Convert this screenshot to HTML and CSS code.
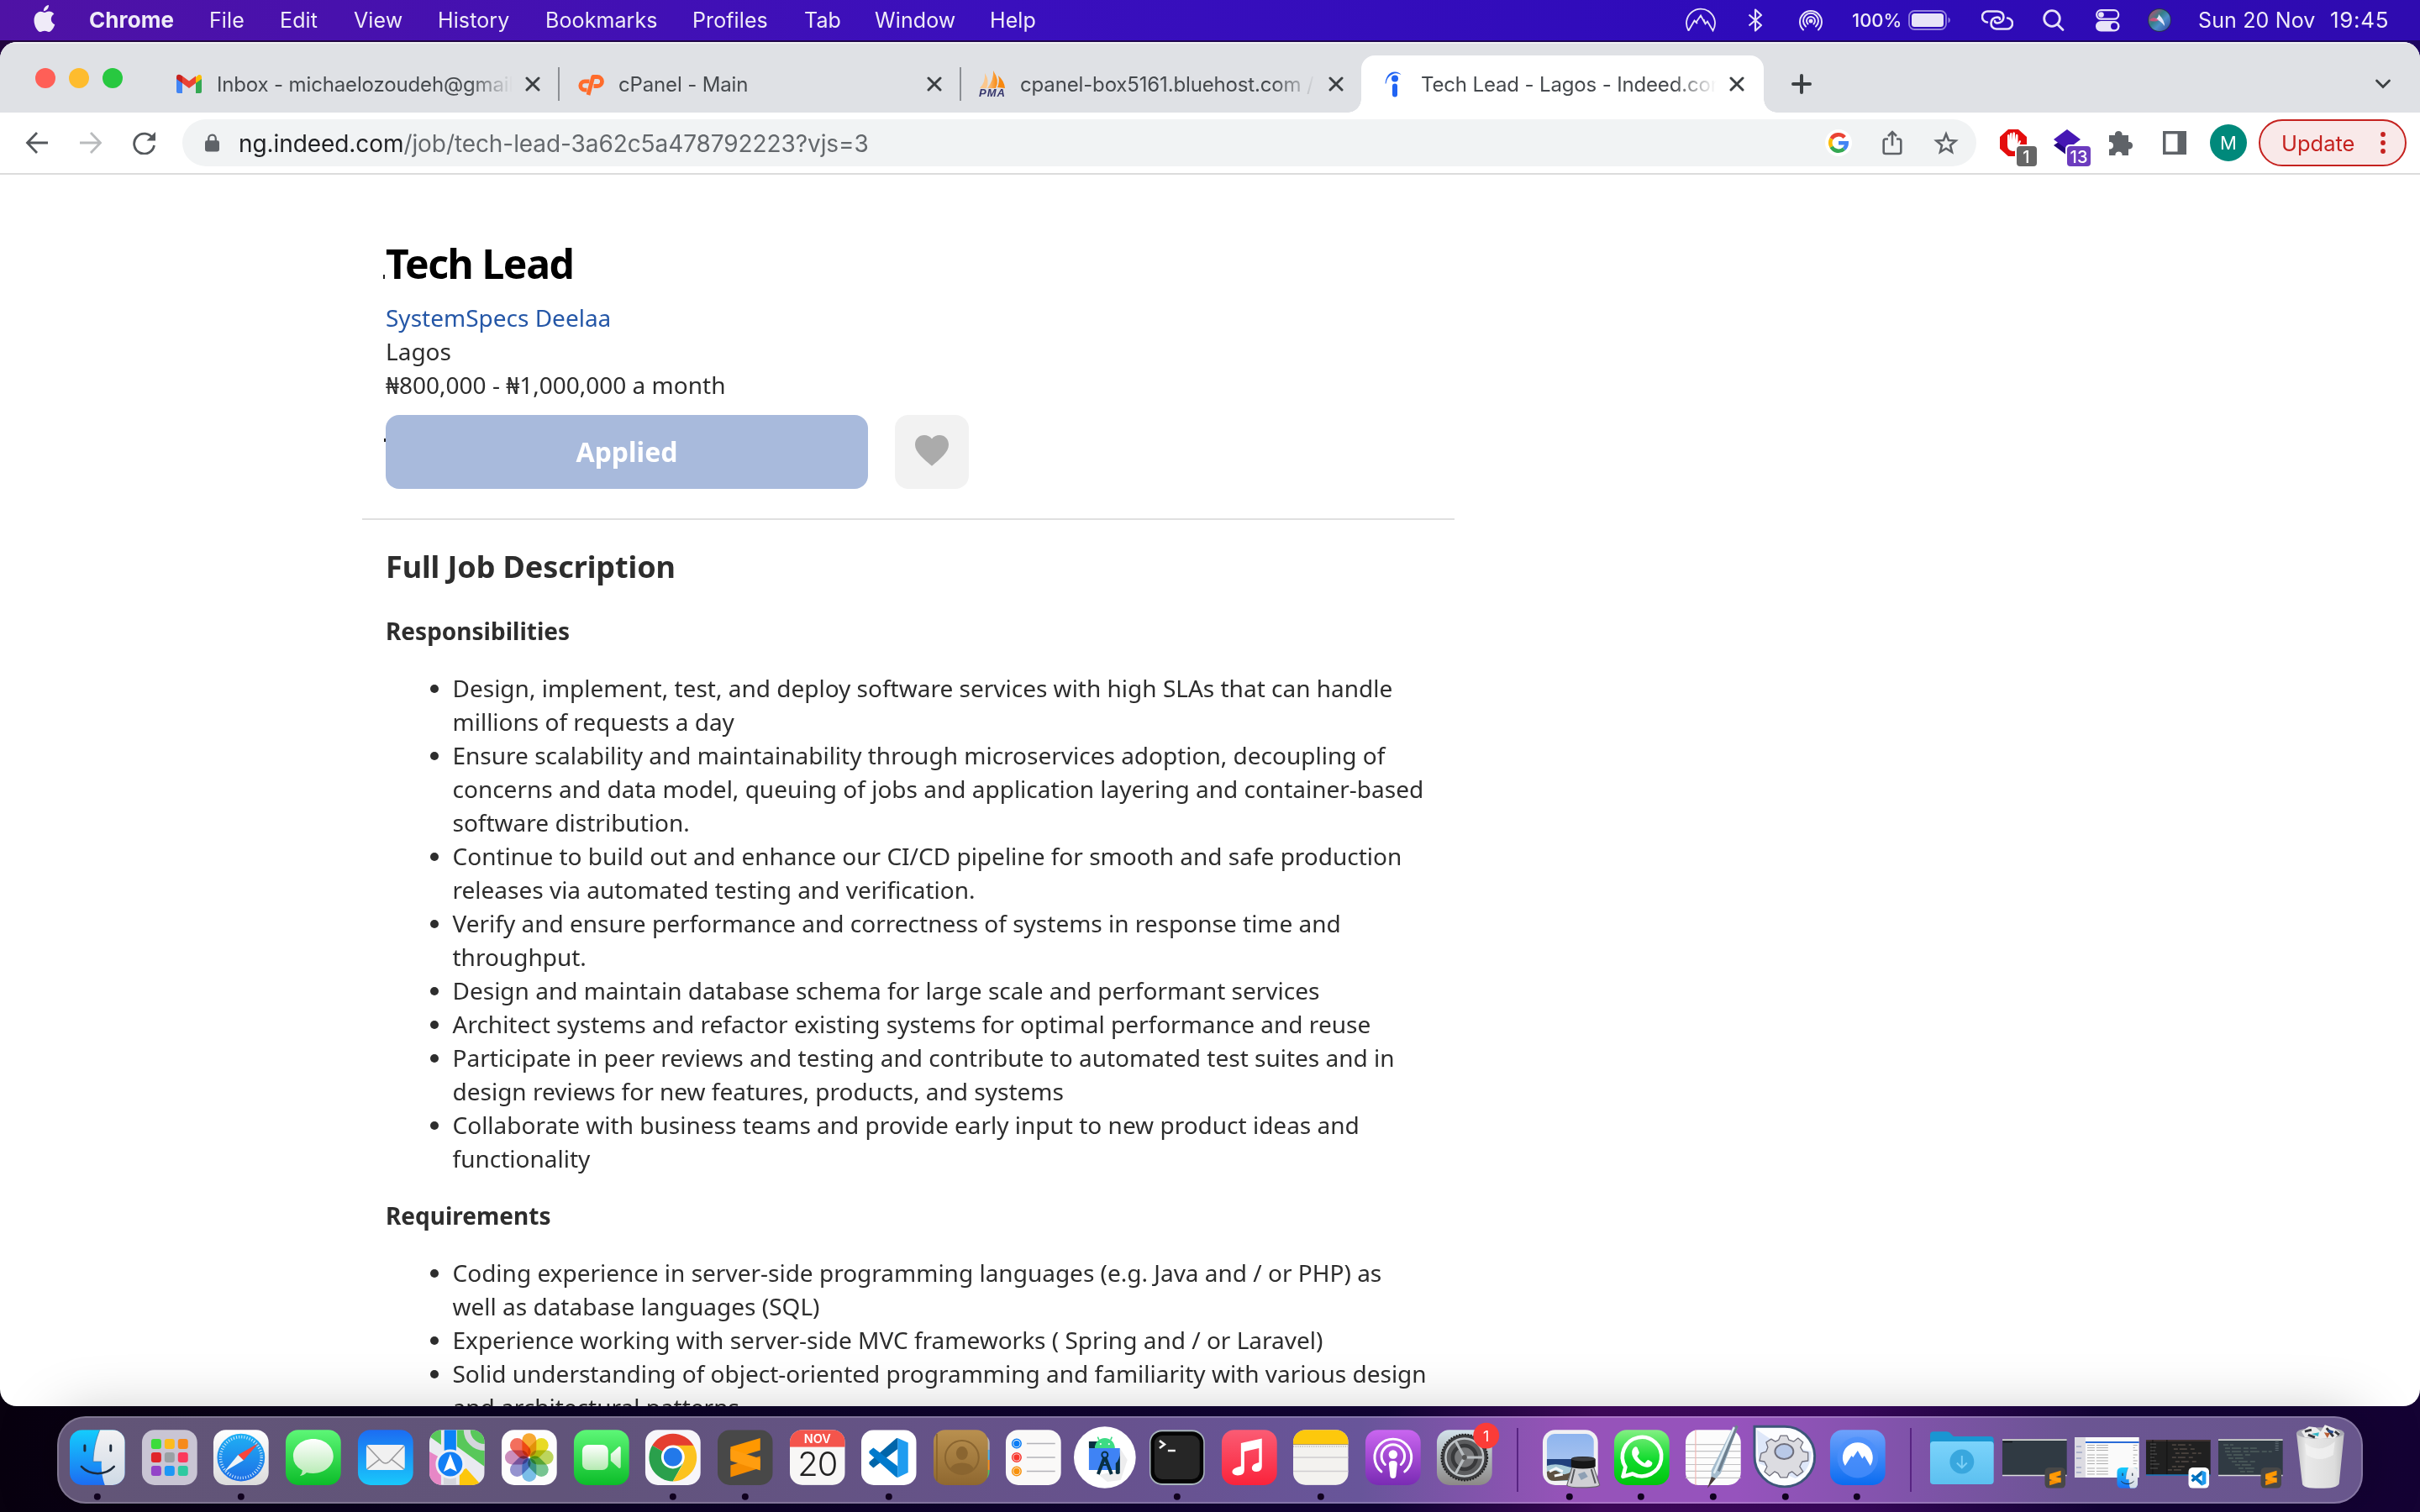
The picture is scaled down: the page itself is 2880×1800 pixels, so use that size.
FILE: index.html
```html
<!DOCTYPE html>
<html lang="en">
<head>
<meta charset="utf-8">
<title>Tech Lead - Lagos - Indeed.com</title>
<link rel="stylesheet" href="styles.css">
</head>
<body>
<svg class="defs" aria-hidden="true">
  <defs>
    <linearGradient id="gGreen" x1="0" y1="0" x2="0" y2="1"><stop offset="0" stop-color="#5df777"/><stop offset="1" stop-color="#0cbd29"/></linearGradient>
    <linearGradient id="gMail" x1="0" y1="0" x2="0" y2="1"><stop offset="0" stop-color="#1c6cf2"/><stop offset="1" stop-color="#19c8fb"/></linearGradient>
    <linearGradient id="gFinder" x1="0" y1="0" x2="0" y2="1"><stop offset="0" stop-color="#14cdfd"/><stop offset="1" stop-color="#1c6df2"/></linearGradient>
    <linearGradient id="gPale" x1="0" y1="0" x2="0" y2="1"><stop offset="0" stop-color="#f3f2f3"/><stop offset="1" stop-color="#cfdae6"/></linearGradient>
    <linearGradient id="gWhite" x1="0" y1="0" x2="0" y2="1"><stop offset="0" stop-color="#ffffff"/><stop offset="1" stop-color="#dcdcdc"/></linearGradient>
    <linearGradient id="gBubble" x1="0" y1="0" x2="0" y2="1"><stop offset="0" stop-color="#ffffff"/><stop offset="1" stop-color="#b5eab2"/></linearGradient>
    <linearGradient id="gSafari" x1="0" y1="0" x2="0" y2="1"><stop offset="0" stop-color="#1fb1f4"/><stop offset="1" stop-color="#1d6ee6"/></linearGradient>
    <linearGradient id="gMusic" x1="0" y1="0" x2="0" y2="1"><stop offset="0" stop-color="#fb5c74"/><stop offset="1" stop-color="#fa233b"/></linearGradient>
    <linearGradient id="gPod" x1="0" y1="0" x2="0" y2="1"><stop offset="0" stop-color="#ca66f0"/><stop offset="1" stop-color="#7a2bb4"/></linearGradient>
    <linearGradient id="gPrefs" x1="0" y1="0" x2="0" y2="1"><stop offset="0" stop-color="#d3e2ea"/><stop offset="1" stop-color="#8c8987"/></linearGradient>
    <linearGradient id="gWhats" x1="0" y1="0" x2="0" y2="1"><stop offset="0" stop-color="#84f084"/><stop offset=".55" stop-color="#10db2c"/><stop offset="1" stop-color="#00c40c"/></linearGradient>
    <linearGradient id="gNord" x1="0" y1="0" x2="0" y2="1"><stop offset="0" stop-color="#6ea2fc"/><stop offset="1" stop-color="#0a6cf0"/></linearGradient>
    <linearGradient id="gBook" x1="0" y1="0" x2="0" y2="1"><stop offset="0" stop-color="#b9904f"/><stop offset="1" stop-color="#8f6830"/></linearGradient>
    <linearGradient id="gFolder" x1="0" y1="0" x2="0" y2="1"><stop offset="0" stop-color="#7bd3fb"/><stop offset="1" stop-color="#5cc0f0"/></linearGradient>
    <linearGradient id="gSky" x1="0" y1="0" x2="0" y2="1"><stop offset="0" stop-color="#8db4ee"/><stop offset="1" stop-color="#b9cdf0"/></linearGradient>
    <linearGradient id="gTrash" x1="0" y1="0" x2="1" y2="0"><stop offset="0" stop-color="#c3c3c5"/><stop offset=".2" stop-color="#e9e9e9"/><stop offset=".8" stop-color="#dcdcdc"/><stop offset="1" stop-color="#bfbfc1"/></linearGradient>
    <linearGradient id="gPMA" x1="0" y1="0" x2="1" y2="0"><stop offset="0" stop-color="#fbc78d"/><stop offset="1" stop-color="#f8880e"/></linearGradient>
    <linearGradient id="gSiri" x1="0" y1="0" x2="1" y2="1"><stop offset="0" stop-color="#d8456c"/><stop offset=".4" stop-color="#347f88"/><stop offset=".6" stop-color="#4f8fc8"/><stop offset="1" stop-color="#2c3f9e"/></linearGradient>
    <clipPath id="cApp"><rect width="66" height="66" rx="15"/></clipPath>
    <symbol id="finder" viewBox="0 0 66 66">
      <g clip-path="url(#cApp)">
        <rect width="66" height="66" fill="url(#gFinder)"/>
        <path d="M36 0C31 12 28.500 24 28 38H38C37.500 48 39 58 42 66H66V0Z" fill="url(#gPale)"/>
      </g>
      <path d="M18 19v6M49 19v6" stroke="#1d2b3c" stroke-width="3" stroke-linecap="round"/>
      <path d="M14 44C24 55 43 55 53 44" fill="none" stroke="#1d2b3c" stroke-width="2.600" stroke-linecap="round"/>
      <path d="M36 0C31 12 28.500 24 28 38H38" fill="none" stroke="#3f6f9c" stroke-width=".7"/>
    </symbol>
    <symbol id="sublime" viewBox="0 0 66 66">
      <rect width="66" height="66" rx="15" fill="#484848"/>
      <path d="M51 10 15.500 20.500V35L51 24.500Z" fill="#ff9800"/>
      <path d="M51 31.500 15.500 42.500V56.500L51 45.500Z" fill="#f58c00"/>
      <path d="M15.500 23 51 34.500V48.500L15.500 37Z" fill="#ff9d0f"/>
    </symbol>
    <symbol id="vscode" viewBox="0 0 66 66">
      <rect width="66" height="66" rx="15" fill="#fff"/>
      <path d="M43.500 10 56 15.500V51L43.500 57Z" fill="#1f9cf0"/>
      <path d="M9.500 41 14.500 45.500 43.500 23V10Q42 10 40.500 11.500L9.500 38.500Z" fill="#0065a9"/>
      <path d="M9.500 25.500 14.500 21.500 43.500 43.500V57Q42 57 40.500 55.500L9.500 28Z" fill="#007acc"/>
    </symbol>
    <symbol id="close" viewBox="0 0 18 18"><path d="M2 2 16 16M16 2 2 16" stroke="#3c4043" stroke-width="3" stroke-linecap="round"/></symbol>
  </defs>
</svg>

<header class="menubar">
  <svg class="apple" viewBox="0 0 26 32"><path fill="#efebf8" d="M18 0C18.300 3.600 15.300 7.300 11.900 7.200 11.600 3.800 14.700.4 18 0ZM12.900 9C14.300 9 15.600 7.600 18.300 7.600 20.700 7.600 22.900 8.700 24.300 10.700 19.100 13.700 20 21.100 25.300 23.200 24.200 26.400 21.300 31.900 18.200 32 16.300 32 15.500 30.800 13.100 30.800 10.700 30.800 9.800 32 8 32 4.600 32 .5 24.700.5 18.300.5 11.900 4.600 7.800 8.300 7.800 10.300 7.800 11.900 9 12.900 9Z"/></svg>
  <nav class="menus">
    <b>Chrome</b><span>File</span><span>Edit</span><span>View</span><span>History</span><span>Bookmarks</span><span>Profiles</span><span>Tab</span><span>Window</span><span>Help</span>
  </nav>
  <div class="status">
    <svg width="38" height="30" viewBox="0 0 38 30" fill="none" stroke="#e8e4f8" stroke-width="1.800"><path d="M4.500 27.500A17 17 0 1 1 33.500 27.500L27 16.500 24.500 19.500 19 9.500 13.500 17.500 11.500 15.500 4.500 27.500M13.500 17.500 15 19M24.500 19.500 22.500 14"/></svg>
    <svg width="18" height="28" viewBox="0 0 18 28" fill="none" stroke="#e8e4f8" stroke-width="2.200" stroke-linejoin="round"><path d="M1.500 7.500 16 20 9 26.500V1.500L16 8 1.500 20.500"/></svg>
    <svg width="30" height="30" viewBox="0 0 30 30" fill="none" stroke="#e8e4f8" stroke-width="2" stroke-linecap="round"><circle cx="15" cy="16" r="2.500" fill="#e8e4f8" stroke="none"/><path d="M6 26.500A13 13 0 1 1 24 26.500M9 22.500A9 9 0 1 1 21 22.500M11.500 19.500A5 5 0 1 1 18.500 19.500"/></svg>
    <span class="pct">100%</span>
    <svg width="52" height="26" viewBox="0 0 52 26"><rect x="1" y="2" width="44" height="22" rx="6.500" fill="none" stroke="#9583e0" stroke-width="1.800"/><rect x="4" y="5" width="38" height="16" rx="3.500" fill="#e8e4f8"/><path d="M47.500 9.500Q50 10.500 50 13T47.500 16.500Z" fill="#9583e0"/></svg>
    <svg width="38" height="26" viewBox="0 0 38 26" fill="none" stroke="#e8e4f8" stroke-width="2.600" stroke-linecap="round"><path d="M7 15.500A6.500 6.500 0 0 1 8 2.500H19Q26.500 3 26.500 9.500 26 16 19 16.500 16 16.500 16 14"/><path d="M31 10.500A6.500 6.500 0 0 1 30 23.500H18Q11.500 23 11.500 16.500 12 10 19 9.500 22 9.500 22 12"/></svg>
    <svg width="26" height="28" viewBox="0 0 26 28" fill="none" stroke="#e8e4f8" stroke-width="2.800" stroke-linecap="round"><circle cx="11" cy="12" r="9.300"/><path d="M18 19.500 24 25.500"/></svg>
    <svg width="29" height="28" viewBox="0 0 29 28"><rect x="1.200" y="2.200" width="26" height="10.500" rx="5.200" fill="none" stroke="#e8e4f8" stroke-width="2.200"/><circle cx="6.500" cy="7.500" r="3.300" fill="#e8e4f8"/><rect y="15" width="28.500" height="12.500" rx="6.200" fill="#e8e4f8"/><circle cx="22" cy="21.200" r="4" fill="#3009b6"/></svg>
    <svg width="29" height="30" viewBox="0 0 29 30"><circle cx="14" cy="15" r="14" fill="#26324f"/><circle cx="14" cy="15" r="13" fill="url(#gSiri)"/><path d="M8 14Q14 14 20 22 20 15 13 8 13 13 8 14Z" fill="#f4f0ff" opacity=".9"/><path d="M2 15Q7 9 13 15 8 18 2 15Z" fill="#e54d7b" opacity=".8"/></svg>
    <span class="date">Sun 20 Nov</span>
    <span class="time">19:45</span>
  </div>
</header>

<main class="window">
  <div class="tabstrip">
    <div class="lights"><i class="red"></i><i class="yellow"></i><i class="green"></i></div>
    <div class="tab">
      <svg class="fav" viewBox="0 0 32 32"><path d="M1 8V25Q1 27 3 27H8V14Z" fill="#4285f4"/><path d="M31 8V25Q31 27 29 27H24V14Z" fill="#34a853"/><path d="M24 8V15L31 10V8Q31 4.500 27.500 5Z" fill="#fbbc04"/><path d="M8 15V6.500L16 12.500 24 6.500V15L16 21Z" fill="#ea4335"/><path d="M1 8V10L8 15V6.500L5.500 5Q1 4 1 8Z" fill="#c5221f"/></svg>
      <span class="title">Inbox - michaelozoudeh@gmail.</span>
      <svg class="x"><use href="#close"/></svg>
    </div>
    <div class="tab sep">
      <svg class="fav" viewBox="0 0 32 32" fill="none" stroke="#ff6c2c" stroke-width="4.800"><path d="M14.500 12.800H9A5.200 5.200 0 0 0 9 23.200H11.500"/><path d="M13 29 18.800 7.500H24A5.500 5.500 0 0 1 24 18.500H19.500" stroke-linejoin="round"/></svg>
      <span class="title">cPanel - Main</span>
      <svg class="x"><use href="#close"/></svg>
    </div>
    <div class="tab sep">
      <svg class="fav" viewBox="0 0 32 32"><path d="M1 21Q8 14 7 3 13 12 9 21Z" fill="#fbc78d"/><path d="M10 21Q18 11 17 0 25 12 20 21Z" fill="url(#gPMA)"/><path d="M22 20Q25 13 23 6 30 12 31 21Z" fill="#f8880e"/><text x="0" y="31" class="pma" textLength="31">PMA</text></svg>
      <span class="title">cpanel-box5161.bluehost.com /</span>
      <svg class="x"><use href="#close"/></svg>
    </div>
    <div class="tab active">
      <svg class="fav" viewBox="0 0 32 32"><circle cx="18" cy="9.500" r="4" fill="#2164f3"/><rect x="15" y="15.500" width="6" height="16" rx="3" fill="#2164f3"/><path d="M6.500 15.500Q8 2 18 1.500 23 1.500 25.500 5 20 2 15 4.500 8.500 7.500 7.500 15.500Z" fill="#2164f3"/></svg>
      <span class="title">Tech Lead - Lagos - Indeed.com</span>
      <svg class="x"><use href="#close"/></svg>
    </div>
    <svg class="plus" viewBox="0 0 24 24"><path d="M12 2V22M2 12H22" stroke="#3c4043" stroke-width="4" stroke-linecap="round"/></svg>
    <svg class="chev" viewBox="0 0 20 12"><path d="M2.500 2 10 9.500 17.500 2" fill="none" stroke="#3c4043" stroke-width="2.800" stroke-linecap="round"/></svg>
  </div>

  <div class="toolbar">
    <div class="navs">
      <svg viewBox="0 0 28 28" fill="none" stroke="#54585c" stroke-width="2.800"><path d="M27 14H3M14 2 2.500 14 14 26"/></svg>
      <svg viewBox="0 0 28 28" fill="none" stroke="#b9bbbd" stroke-width="2.800"><path d="M1 14H25M14 2 25.500 14 14 26"/></svg>
      <svg viewBox="0 0 28 28"><path d="M24 9A12 12 0 1 0 25.500 17" fill="none" stroke="#54585c" stroke-width="2.800"/><path d="M27 1V11.500H16.500Z" fill="#54585c"/></svg>
    </div>
    <div class="omnibox">
      <svg class="lock" viewBox="0 0 18 22"><rect y="8" width="18" height="14" rx="2.500" fill="#5f6368"/><path d="M4.500 9V5.500A4.500 4.500 0 0 1 13.500 5.500V9" fill="none" stroke="#5f6368" stroke-width="2.400"/></svg>
      <span class="url"><b>ng.indeed.com</b>/job/tech-lead-3a62c5a478792223?vjs=3</span>
      <svg class="goog" viewBox="0 0 32 32"><circle cx="16" cy="16" r="16" fill="#fff"/><g fill="none" stroke-width="4.600"><path d="M23.200 9.500A9.700 9.700 0 0 0 7.600 11.200" stroke="#ea4335"/><path d="M7.600 11.200A9.700 9.700 0 0 0 7.600 20.800" stroke="#fbbc05"/><path d="M7.600 20.800A9.700 9.700 0 0 0 22.500 23.300" stroke="#34a853"/><path d="M16 16.200H25.700A9.700 9.700 0 0 1 22.500 23.300" stroke="#4285f4"/></g></svg>
      <svg class="share" viewBox="0 0 24 30" fill="none" stroke="#5f6368" stroke-width="2.600"><path d="M7 10.500H4Q1.700 10.500 1.700 13V26Q1.700 28 4 28H20Q22.300 28 22.300 26V13Q22.300 10.500 20 10.500H17M12 18.500V3M7 7 12 2 17 7"/></svg>
      <svg class="star" viewBox="0 0 30 30"><path d="M15 4.500 18 12 26.500 12.500 20 18 22 26 15 21.700 8 26 10 18 3.500 12.500 12 12Z" fill="none" stroke="#5f6368" stroke-width="2.600"/></svg>
    </div>
    <div class="exts">
      <svg viewBox="0 0 46 56"><path d="M13 12H25L35 21V35L25 44H13L3 35V21Z" fill="#e40d0d"/><path d="M12 27V19Q13.500 17 14.500 19V25L15 17Q16.500 15 17.500 17V25L18.500 16Q20 14.500 21 16.500V25L22 18.500Q23.500 17 24.500 19V29L26 25.500Q28 24.500 28 26.500L24.500 35Q23 38 18.500 38 12 37 12 31Z" fill="#fff"/><rect x="21" y="30" width="28" height="28" rx="5" fill="#fff"/><rect x="23" y="32" width="24" height="24" rx="4" fill="#666"/><text x="34.500" y="51.500" class="badge">1</text></svg>
      <svg viewBox="0 0 46 56"><path d="M2 31 8 27 26 36 18 43Z" fill="#23057c"/><path d="M18 12 34 24 18 36 2 24Z" fill="#4617b4"/><rect x="16" y="30" width="32" height="28" rx="5" fill="#fff"/><rect x="18" y="32" width="28" height="24" rx="4" fill="#6c3cbe"/><text x="32" y="51.500" class="badge">13</text></svg>
      <svg viewBox="0 0 46 56"><path d="M3 19H10V17A4.500 4.500 0 0 1 18.500 17V19H26V27H28A4.500 4.500 0 0 1 28 35.500H26V43H18.500V41A4.500 4.500 0 0 0 10.500 41V43H3V35.500H5A4.500 4.500 0 0 0 5 27H3Z" fill="#5f6368"/></svg>
      <svg viewBox="0 0 46 56"><path d="M2 14H30V42H2ZM5.500 17.500V38.500H19.500V17.500Z" fill="#5f6368" fill-rule="evenodd"/></svg>
    </div>
    <span class="avatar">M</span>
    <span class="update">Update<svg viewBox="0 0 6 28"><g fill="#c5221f"><circle cx="3" cy="4" r="2.900"/><circle cx="3" cy="14" r="2.900"/><circle cx="3" cy="24" r="2.900"/></g></svg></span>
  </div>

  <article class="page">
    <div class="head">
      <i class="speck a"></i><i class="speck b"></i>
      <h1>Tech Lead</h1>
      <p class="company">SystemSpecs Deelaa</p>
      <p>Lagos</p>
      <p>₦800,000 - ₦1,000,000 a month</p>
      <div class="actions">
        <span class="applied">Applied</span>
        <span class="save"><svg viewBox="0 0 40 37"><path d="M20 36.700C10 28 0 20.500 0 11.200 0 4.800 4.800 0 11 0 14.600 0 18 1.700 20 4.400 22 1.700 25.400 0 29 0 35.200 0 40 4.800 40 11.200 40 20.500 30 28 20 36.700Z" fill="#ababab"/></svg></span>
      </div>
    </div>
    <div class="desc">
      <h2>Full Job Description</h2>
      <h3>Responsibilities</h3>
      <ul>
        <li>Design, implement, test, and deploy software services with high SLAs that can handle<br>millions of requests a day</li>
        <li>Ensure scalability and maintainability through microservices adoption, decoupling of<br>concerns and data model, queuing of jobs and application layering and container-based<br>software distribution.</li>
        <li>Continue to build out and enhance our CI/CD pipeline for smooth and safe production<br>releases via automated testing and verification.</li>
        <li>Verify and ensure performance and correctness of systems in response time and<br>throughput.</li>
        <li>Design and maintain database schema for large scale and performant services</li>
        <li>Architect systems and refactor existing systems for optimal performance and reuse</li>
        <li>Participate in peer reviews and testing and contribute to automated test suites and in<br>design reviews for new features, products, and systems</li>
        <li>Collaborate with business teams and provide early input to new product ideas and<br>functionality</li>
      </ul>
      <h3>Requirements</h3>
      <ul>
        <li>Coding experience in server-side programming languages (e.g. Java and / or PHP) as<br>well as database languages (SQL)</li>
        <li>Experience working with server-side MVC frameworks ( Spring and / or Laravel)</li>
        <li>Solid understanding of object-oriented programming and familiarity with various design<br>and architectural patterns</li>
      </ul>
    </div>
  </article>
</main>

<footer class="dock">
  <svg viewBox="-10 -16 86 104"><use href="#finder" width="66" height="66"/><circle class="dot" cx="33" cy="80" r="4"/></svg>
  <svg viewBox="-10 -16 86 104"><rect width="66" height="66" rx="15" fill="#c9c5d4"/><g><rect x="11" y="11" width="12" height="12" rx="3" fill="#3ddc3c"/><rect x="27" y="11" width="12" height="12" rx="3" fill="#fdbb1c"/><rect x="43" y="11" width="12" height="12" rx="3" fill="#f68a1c"/><rect x="11" y="27" width="12" height="12" rx="3" fill="#e0242a"/><rect x="27" y="27" width="12" height="12" rx="3" fill="#9aa0a4"/><rect x="43" y="27" width="12" height="12" rx="3" fill="#fb3a5c"/><rect x="11" y="43" width="12" height="12" rx="3" fill="#9344c8"/><rect x="27" y="43" width="12" height="12" rx="3" fill="#1d97f5"/><rect x="43" y="43" width="12" height="12" rx="3" fill="#2dc9a0"/></g></svg>
  <svg viewBox="-10 -16 86 104"><rect width="66" height="66" rx="15" fill="url(#gWhite)"/><circle cx="33" cy="33" r="28.500" fill="url(#gSafari)"/><circle cx="33" cy="33" r="24.500" fill="none" stroke="#d6ecfb" stroke-width="3.500" stroke-dasharray="1 2.200"/><path d="M54 16 36 36.500 29.500 30Z" fill="#f7453b"/><path d="M13 50 29.500 30 36 36.500Z" fill="#eef3f7"/><circle class="dot" cx="33" cy="80" r="4"/></svg>
  <svg viewBox="-10 -16 86 104"><rect width="66" height="66" rx="15" fill="url(#gGreen)"/><path d="M33 11C46.500 11 57 20 57 31.500S46.500 52 33 52Q28.500 52 25 51 22 54.500 17 55 20 52 20 48.500 9 43 9 31.500C9 20 19.500 11 33 11Z" fill="url(#gBubble)"/></svg>
  <svg viewBox="-10 -16 86 104"><rect width="66" height="66" rx="15" fill="url(#gMail)"/><rect x="10" y="18" width="46" height="30" rx="3.500" fill="#f1f1f1"/><path d="M11 19.500 28.500 38Q33 42 37.500 38L55 19.500M11 47 26 35M55 47 40 35" fill="none" stroke="#9a9a9c" stroke-width="1.600"/></svg>
  <svg viewBox="-10 -16 86 104"><g clip-path="url(#cApp)"><rect width="66" height="66" fill="#e9eaf0"/><path d="M0 0H14V18L0 8ZM33 0H66V44L33 20Z" fill="#58c85a"/><path d="M0 26 14 34V66H0Z" fill="#e787c6"/><path d="M36 66V50L44 46 62 66Z" fill="#fdc70c"/><rect x="17" width="15" height="66" fill="#d4d5dc"/><rect x="18" width="14" height="30" fill="#0a82f7"/><circle cx="66" cy="0" r="21" fill="none" stroke="#d5d6dc" stroke-width="8"/></g><circle cx="25" cy="41" r="16" fill="#127ef5" stroke="#eef0f5" stroke-width="3"/><path d="M25 29 33 50 25 46 17 50Z" fill="#fff"/></svg>
  <svg viewBox="-10 -16 86 104"><rect width="66" height="66" rx="15" fill="#fdfdfd"/><g class="petals"><rect x="24.500" y="4" width="17" height="28" rx="8.500" fill="#f9a11b"/><rect x="24.500" y="4" width="17" height="28" rx="8.500" fill="#e8d90c" transform="rotate(45 33 33)"/><rect x="24.500" y="4" width="17" height="28" rx="8.500" fill="#b7d34c" transform="rotate(90 33 33)"/><rect x="24.500" y="4" width="17" height="28" rx="8.500" fill="#69c086" transform="rotate(135 33 33)"/><rect x="24.500" y="4" width="17" height="28" rx="8.500" fill="#6db9e8" transform="rotate(180 33 33)"/><rect x="24.500" y="4" width="17" height="28" rx="8.500" fill="#8a88cc" transform="rotate(225 33 33)"/><rect x="24.500" y="4" width="17" height="28" rx="8.500" fill="#c883b8" transform="rotate(270 33 33)"/><rect x="24.500" y="4" width="17" height="28" rx="8.500" fill="#f4604c" transform="rotate(315 33 33)"/></g></svg>
  <svg viewBox="-10 -16 86 104"><rect width="66" height="66" rx="15" fill="url(#gGreen)"/><rect x="10" y="18" width="31" height="30" rx="7" fill="url(#gBubble)"/><path d="M44 29 54 20Q56 19.500 56 22V44Q56 46.500 54 46L44 37Z" fill="url(#gBubble)"/></svg>
  <svg viewBox="-10 -16 86 104"><rect width="66" height="66" rx="15" fill="#f7f6fa"/><path d="M33 33 8.300 18.800A28.500 28.500 0 0 1 57.700 18.800Z" fill="#e53e30"/><path d="M33 33 8.300 18.800A28.500 28.500 0 0 0 33 61.500L45 40Z" fill="#2aa04c"/><path d="M33 18.800H57.700A28.500 28.500 0 0 1 33 61.500L45.500 40Z" fill="#fcc31e"/><circle cx="33" cy="32.500" r="14" fill="#fff"/><circle cx="33" cy="32.500" r="11" fill="#2279ea"/><circle class="dot" cx="33" cy="80" r="4"/></svg>
  <svg viewBox="-10 -16 86 104"><use href="#sublime" width="66" height="66"/><circle class="dot" cx="33" cy="80" r="4"/></svg>
  <svg viewBox="-10 -16 86 104"><g clip-path="url(#cApp)"><rect width="66" height="66" fill="#f8f7f6"/><rect width="66" height="20.500" fill="#f4554c"/></g><text x="33" y="16" class="nov">NOV</text><text x="33" y="55.500" class="day">20</text></svg>
  <svg viewBox="-10 -16 86 104"><use href="#vscode" width="66" height="66"/><circle class="dot" cx="33" cy="80" r="4"/></svg>
  <svg viewBox="-10 -16 86 104"><path d="M56 8H62Q67 10 67 16V24H56Z" fill="#b8b8b8"/><path d="M56 24H67V36H56Z" fill="#4ab5ee"/><path d="M56 36H67V48H56Z" fill="#f5921e"/><path d="M56 48H67Q67 58 60 60Z" fill="#4fc85c"/><rect x="0" width="65" height="66" rx="14" fill="url(#gBook)"/><path d="M4 5V61" stroke="#85602a" stroke-width="1.500"/><circle cx="34" cy="33" r="20" fill="none" stroke="#8a6530" stroke-width="2"/><ellipse cx="34" cy="28" rx="7" ry="8" fill="#8a6530"/><path d="M20 46Q24 39.500 34 39.500T48 46Q42 53 34 53T20 46Z" fill="#8a6530"/></svg>
  <svg viewBox="-10 -16 86 104"><rect width="66" height="66" rx="15" fill="#faf9f8"/><path d="M25 16.500H59M25 33H59M25 49.500H59" stroke="#b4b4b8" stroke-width="1.500"/><g stroke-width="1.500" fill="none"><circle cx="13" cy="16.500" r="5.300" stroke="#0a7cf5"/><circle cx="13" cy="33" r="5.300" stroke="#f8352c"/><circle cx="13" cy="49.500" r="5.300" stroke="#f8920c"/></g><circle cx="13" cy="16.500" r="3.700" fill="#0a7cf5"/><circle cx="13" cy="33" r="3.700" fill="#f8352c"/><circle cx="13" cy="49.500" r="3.700" fill="#f8920c"/></svg>
  <svg viewBox="-10 -16 86 104"><circle cx="33" cy="33" r="37" fill="#fff"/><path d="M51 22 60 36 52 60 36 62 26 54 51 48Z" fill="#ededee"/><path d="M14 14H26V28H18Q14 26 14 20Z" fill="#093042"/><path d="M21 22A12 12 0 0 1 45 22Z" fill="#3ddb85"/><path d="M26 12 24.500 8.500M40 12 41.500 8.500" stroke="#3ddb85" stroke-width="1.500"/><circle cx="28" cy="17" r="1.100" fill="#fff"/><circle cx="38" cy="17" r="1.100" fill="#fff"/><path d="M14 22H51V48H14Z" fill="#3f83f5"/><path d="M46 40Q51 36 51 26V52Q48 54 46 52Z" fill="#093042"/><path d="M33 32 25 53M33 32 41 53" stroke="#093042" stroke-width="4"/><path d="M28 42H38" stroke="#093042" stroke-width="2"/><circle cx="33" cy="30" r="3.500" fill="#3f83f5" stroke="#093042" stroke-width="2"/></svg>
  <svg viewBox="-10 -16 86 104"><rect width="66" height="66" rx="15" fill="#a9b6bc"/><rect x="1.500" y="2" width="63" height="62" rx="13.500" fill="#050505"/><rect x="6" y="7" width="54" height="52" rx="9" fill="#262626"/><path d="M12 13 18 17.500 12 22M22 25H31" fill="none" stroke="#f2f2f2" stroke-width="2.600"/><circle class="dot" cx="33" cy="80" r="4"/></svg>
  <svg viewBox="-10 -16 86 104"><rect width="66" height="66" rx="15" fill="url(#gMusic)"/><path d="M23 16 48 10.500V43.500Q48 50 41.500 50 36 50 36 45.500T44.500 39V22L27 26V48Q27 54.500 19 54.500 12.500 54 12.500 50T23 43.500Z" fill="#fff"/></svg>
  <svg viewBox="-10 -16 86 104"><g clip-path="url(#cApp)"><rect width="66" height="66" fill="#f3f2ef"/><rect width="66" height="17" fill="#fdc80c"/><path d="M0 17.500H66" stroke="#a8925a"/><path d="M0 20H66" stroke="#c9c8c4" stroke-width="2" stroke-dasharray="1.200 1.500"/><path d="M0 33H66M0 49.500H66" stroke="#cfcdd0" stroke-width="1.400"/></g><circle class="dot" cx="33" cy="80" r="4"/></svg>
  <svg viewBox="-10 -16 86 104"><rect width="66" height="66" rx="15" fill="url(#gPod)"/><g fill="none" stroke="#fff" stroke-width="3" stroke-linecap="round"><path d="M19 50A22 22 0 1 1 47 50"/><path d="M23.500 41.500A13.800 13.800 0 1 1 42.500 41.500"/></g><circle cx="33" cy="29.500" r="5.200" fill="#fff"/><path d="M28 41Q28 37 33 37T38 41L36.500 55Q36 58 33 58T29.500 55Z" fill="#fff"/></svg>
  <svg viewBox="-10 -16 86 104"><rect width="66" height="66" rx="15" fill="url(#gPrefs)"/><circle cx="33" cy="33" r="27.500" fill="#3d3e40" stroke="#222" stroke-width="2" stroke-dasharray="2 1.500"/><circle cx="33" cy="33" r="22.500" fill="#5c5d5f" stroke="#c0c5c8" stroke-width="2.500"/><circle cx="33" cy="33" r="14" fill="#77787a" stroke="#38393b" stroke-width="4.500"/><path d="M33 33H56M33 33 22 13M33 33 22 53" stroke="#b9bec1" stroke-width="3.200"/><circle cx="33" cy="33" r="3" fill="#555"/><circle cx="59" cy="7" r="15.500" fill="#fb3c38"/><text x="59" y="13.500" class="one">1</text></svg>
  <i class="divider"></i>
  <svg viewBox="-10 -16 86 104"><rect width="66" height="66" rx="15" fill="#f1f1f3"/><g><rect x="5" y="5" width="56" height="56" rx="9" fill="url(#gSky)"/><path d="M5 35H61V46H5Z" fill="#20407c"/><path d="M5 43Q16 39 30 44T61 44V52Q61 61 52 61H14Q5 61 5 52Z" fill="#a9cbd8"/><path d="M5 50Q14 46 20 51T34 50L30 60 14 61Q5 61 5 52Z" fill="#5c5042"/><path d="M8 50 16 46 24 50M14 55 24 53" stroke="#f4f8fa" stroke-width="3" fill="none"/></g><path d="M35 45H61L68 66Q66 69 48 69T29 66Z" fill="#d0d0d4" stroke="#66666a" stroke-width="1.200"/><path d="M38 47 34 64M58 47 63 64" stroke="#55565a" stroke-width="2"/><path d="M42 53 50 50 54 56 46 60Z" fill="#8fa0b4"/><path d="M34 35Q34 32 48 32T63 35V44Q60 46.500 48 46.500T34 44Z" fill="#161617"/><ellipse cx="48.500" cy="35" rx="14" ry="2.400" fill="#3b3b3e"/><circle class="dot" cx="32" cy="80" r="4"/></svg>
  <svg viewBox="-10 -16 86 104"><rect width="66" height="66" rx="15" fill="url(#gWhats)"/><path d="M10.500 56 13.500 44.500A23.300 23.300 0 1 1 22 52.500Z" fill="none" stroke="#fff" stroke-width="4.600" stroke-linejoin="round"/><path d="M24 21Q26 19.500 27.500 21L30 27Q30 29 27.500 31.500 30.500 37 36.500 40L39.500 36.500Q40.500 35.500 42 36.500L45.500 39Q46 42 43 44 39 46 33 43 24 38 21.500 30 20.500 24 24 21Z" fill="#fff"/><circle class="dot" cx="32" cy="80" r="4"/></svg>
  <svg viewBox="-10 -16 86 104"><rect x="-1" width="66" height="66" rx="15" fill="#fcfcfc"/><path d="M-1 17.500H65M-1 25.500H65M-1 33.500H65M-1 41.500H65M-1 49.500H65M-1 57.500H65" stroke="#c2c2c4" stroke-width="1.200"/><path d="M11 0V66" stroke="#f2b8b4" stroke-width="1.200"/><path d="M56-4 61-2 41 52 29 65 30 48Z" fill="#a5bccd"/><path d="M59-6 62-4 40 50 37 49Z" fill="#6d7f8e"/><path d="M57-3 33 52" stroke="#e0edf4" stroke-width="2.500"/><path d="M30 56 35 58 25 70Z" fill="#4a3c3a"/><circle class="dot" cx="32" cy="80" r="4"/></svg>
  <svg viewBox="-10 -16 86 104"><path d="M-5-4H30A36 36 0 0 1 67 31A36 36 0 0 1 31 68A36 36 0 0 1-5 31Z" fill="#fcfdff" stroke="#3d5679" stroke-width="3"/><path d="M-2 0 20 15 63 26Q62 50 44 58L0 40Z" fill="#c9d9f5" opacity=".6"/><g fill="#dcdce1" stroke="#6f6f7c" stroke-width="1.300" stroke-linejoin="round"><path d="M26 7H34L36 12 42 14 47 10 53 15 50 21 53 26 59 27V37L52 38 49 44 53 50 46 55 40 50 36 52 34 57H26L23 52 19 50 13 55 7 50 10 44 7 38 1 37 3 28 9 26 11 21 9 15 15 11 20 14 24 12Z"/><ellipse cx="30.500" cy="26" rx="11" ry="9" fill="#b9c9e8" stroke-width="2"/></g><circle class="dot" cx="32" cy="80" r="4"/></svg>
  <svg viewBox="-10 -16 86 104"><rect width="66" height="66" rx="15" fill="url(#gNord)"/><circle cx="33" cy="33" r="24.500" fill="#4b8ffb" opacity=".75"/><path d="M18 43A18 18 0 1 1 48 43L41 31 38.500 34.500 33 25 27.500 33 25.500 31Z" fill="#fff"/><circle class="dot" cx="32" cy="80" r="4"/></svg>
  <i class="divider"></i>
  <svg viewBox="-10 -16 86 104"><path d="M-6 6Q-6 2-2 2H14Q17 2 19 5L22 8H66Q70 8 70 12V24H-6Z" fill="#1a96d2"/><path d="M-6 18Q-6 14-2 14H66Q70 14 70 18V61Q70 65 66 65H-2Q-6 65-6 61Z" fill="url(#gFolder)"/><circle cx="32" cy="38" r="14.500" fill="#39a7de"/><path d="M32 31V45M26 39.500 32 45.500 38 39.500" fill="none" stroke="#7bd0f7" stroke-width="2"/></svg>
  <svg viewBox="-10 -16 86 104"><path d="M-6 11H71V55H-6Z" fill="#303a43"/><path d="M-6 12H71M-6 54.500H71" stroke="#dcdcdc" stroke-width="1.600"/><path d="M-5 14.500H6" stroke="#15191d" stroke-width="1.500"/><use href="#sublime" x="44.500" y="45" width="25" height="25"/></svg>
  <svg viewBox="-10 -16 86 104"><path d="M-6 9H71V57H-6Z" fill="#fafafa"/><path d="M-6 9H7V57H-6Z" fill="#dcdbe2"/><path d="M7 15H71" stroke="#2a6bd8" stroke-width="2"/><g stroke="#999" stroke-width=".8" stroke-dasharray="9 2 14 30 5 3"><path d="M9 18.500H70M9 21.500H66M9 24.500H70M9 30H70M9 33.500H66M9 37H70M9 40.500H68M9 46H70M9 49.500H70M9 53H60"/></g><path d="M-4 20H2M-4 27H3M-4 34H2M-4 45H2M-4 51H2" stroke="#7d8bb5"/><use href="#finder" x="44.500" y="45" width="25" height="25"/></svg>
  <svg viewBox="-10 -16 86 104"><path d="M-6 12H71V54H-6Z" fill="#202020"/><path d="M-6 13H71" stroke="#4a3838" stroke-width="1.500"/><path d="M19 12V54M2 12V54" stroke="#111"/><g stroke="#75685e" stroke-width=".9" stroke-dasharray="5 2 9 4"><path d="M25 18H48M27 23H52M29 28H60M25 33H50M29 38H56M25 44H40M20 48H40"/></g><path d="M-1 17H6M-1 21H6M-1 25H5M-1 29H7M-1 33H4M-1 37H6M-1 41H10M-1 46H8" stroke="#666" stroke-width=".8"/><path d="M-6 54H71" stroke="#1679be" stroke-width="1.600"/><use href="#vscode" x="44.500" y="45" width="25" height="25"/></svg>
  <svg viewBox="-10 -16 86 104"><path d="M-6 11H71V55H-6Z" fill="#303a43"/><path d="M-6 12H71M-6 54.500H71" stroke="#dcdcdc" stroke-width="1.600"/><g stroke="#63776f" stroke-width=".9" stroke-dasharray="6 2 11 3"><path d="M0 18H12M2 22H40M2 26H58M4 30H34M6 34H24M10 38H38M14 42H36M18 46H38M20 50H36"/></g><path d="M64 14V26" stroke="#59656e" stroke-width="4" stroke-dasharray="1 1"/><use href="#sublime" x="44.500" y="45" width="25" height="25"/></svg>
  <svg viewBox="-7 -16 86 104"><path d="M4 4 61 4 55 64Q53 70 32 70T11 64Z" fill="url(#gTrash)"/><path d="M14 16Q32 30 50 14L48 30Q32 40 16 30Z" fill="#f6f6f6" opacity=".6"/><ellipse cx="32.500" cy="4" rx="28.500" ry="7" fill="#a9a9b2"/><path d="M10 2 19-4 27-3 33 2 38-6 49-2 56 3 50 10 32 11 14 9Z" fill="#ececec"/><path d="M14 2 22 0M18 6 26 9M40-2 48 8M50 2 55 6" stroke="#35363c" stroke-width="3"/><path d="M22 5 31 3 30 8Z" fill="#36b6c6"/><path d="M37 3 44 4 41 10Z" fill="#b85d35"/><path d="M42 1 48 3" stroke="#2b4f94" stroke-width="3"/></svg>
</footer>
</body>
</html>
```
FILE: styles.css
```css
* { box-sizing: border-box; }

body {
  margin: 0;
  width: 2880px;
  height: 1800px;
  overflow: hidden;
  display: flex;
  flex-direction: column;
  font-family: Inter, "Liberation Sans", sans-serif;
  background:
    linear-gradient(90deg, #4f12a5 0, #3a0fbd 1200px, #2e0bba 2100px, #2f0bb0 100%) 0 0 / 100% 48px no-repeat,
    linear-gradient(90deg, #22063e 0, #1c0660 100%) 0 48px / 100% 60px no-repeat,
    linear-gradient(90deg, #08010f 0, #0b0224 600px, #120338 1650px, #430861 1900px, #3d0763 2200px, #14033a 2500px, #140233 100%);
}

h1, h2, h3, p, ul { margin: 0; }
.defs { position: absolute; width: 0; height: 0; }

/* Menu bar */
.menubar {
  height: 50px;
  flex: none;
  padding-left: 40px;
  display: flex;
  align-items: center;
  color: #efebf8;
  font-size: 25px;
  line-height: 46px;
  padding-bottom: 3px;
}
.apple { width: 26px; height: 32px; margin-right: 40px; margin-top: -3px; flex: none; }
.menus {
  display: grid;
  grid-template-columns: 143px 84px 88px 100px 128px 175px 133px 84px 137px 827px;
  flex: none;
}
.menus b { font-size: 26px; letter-spacing: .1px; }
.menus span { letter-spacing: .1px; }
.status {
  display: grid;
  grid-template-columns: 75px 60px 64px 67px 87px 73px 63px 62px 60px 157px 80px;
  align-items: center;
}
.status svg { display: block; }
.pct { font-size: 22px; font-weight: 500; }
.date, .time { white-space: nowrap; }
.date { letter-spacing: .15px; }
.time { font-size: 26px; letter-spacing: .7px; }

/* Browser window */
.window {
  height: 1624px;
  flex: none;
  display: flex;
  flex-direction: column;
  background: #fff;
  border-radius: 20px;
  overflow: hidden;
}
.tabstrip {
  height: 84px;
  flex: none;
  display: flex;
  align-items: flex-end;
  background: #dfe1e5;
  border-top: 2px solid #f0f1f3;
}
.lights { width: 187px; padding: 0 0 29px 42px; display: flex; gap: 16px; flex: none; }
.lights i { width: 24px; height: 24px; border-radius: 50%; }
.red { background: #ff5f57; }
.yellow { background: #febc2e; }
.green { background: #28c840; }
.tab {
  position: relative;
  width: 478px;
  height: 68px;
  flex: none;
  padding-left: 22px;
  display: flex;
  align-items: center;
  color: #45494d;
}
.tab.sep::before {
  content: "";
  position: absolute;
  left: -1px;
  top: 14px;
  width: 2px;
  height: 40px;
  background: #8c8f94;
}
.tab.active { width: 479px; background: #fff; border-radius: 16px 16px 0 0; margin-left: -1px; }
.tab.active::before, .tab.active::after {
  content: "";
  position: absolute;
  bottom: 0;
  width: 16px;
  height: 16px;
}
.tab.active::before { left: -16px; background: radial-gradient(circle at 0 0, transparent 15.5px, #fff 16px); }
.tab.active::after { right: -16px; background: radial-gradient(circle at 100% 0, transparent 15.5px, #fff 16px); }
.fav { width: 32px; height: 32px; margin-right: 17px; flex: none; }
.pma { font: italic bold 13px "Liberation Sans", sans-serif; fill: #35356b; }
.title {
  width: 352px;
  margin-right: 15px;
  flex: none;
  overflow: hidden;
  white-space: nowrap;
  font-size: 24px;
  letter-spacing: -.15px;
  -webkit-mask-image: linear-gradient(90deg, #000 300px, transparent 352px);
  mask-image: linear-gradient(90deg, #000 300px, transparent 352px);
}
.x { width: 18px; height: 18px; }
.plus { width: 24px; height: 24px; margin: 0 0 22px 33px; }
.chev { width: 20px; height: 12px; margin: 0 34px 28px auto; }

.toolbar {
  height: 74px;
  flex: none;
  display: flex;
  align-items: center;
  border-bottom: 2px solid #dcdcdc;
}
.navs { width: 217px; padding-left: 30px; display: flex; gap: 36px; flex: none; }
.navs svg { width: 28px; height: 28px; }
.omnibox {
  width: 2135px;
  height: 56px;
  flex: none;
  padding-left: 27px;
  display: flex;
  align-items: center;
  border-radius: 28px;
  background: #f1f3f4;
}
.lock { width: 17px; height: 22px; margin-right: 23px; }
.url { width: 1888px; font-size: 28px; letter-spacing: -.08px; color: #64686c; white-space: nowrap; flex: none; margin-top: 1px; }
.url b { font-weight: 400; color: #202124; }
.goog { width: 32px; height: 32px; margin-right: 36px; flex: none; }
.share { width: 24px; height: 30px; margin-right: 37px; flex: none; }
.star { width: 30px; height: 30px; flex: none; }
.exts { width: 278px; padding-left: 25px; display: flex; gap: 19px; flex: none; }
.exts svg { width: 46px; height: 56px; overflow: visible; }
.badge { font-size: 20px; font-weight: 500; fill: #fff; text-anchor: middle; }
.avatar {
  width: 44px;
  height: 44px;
  flex: none;
  border-radius: 50%;
  background: #00897b;
  color: #fff;
  font-size: 22px;
  line-height: 44px;
  text-align: center;
}
.update {
  width: 176px;
  height: 56px;
  margin-left: 14px;
  padding: 0 23px 0 25px;
  display: flex;
  align-items: center;
  justify-content: space-between;
  border: 2px solid #c5221f;
  border-radius: 28px;
  background: #f9e9e9;
  color: #c5221f;
  font-size: 25.500px;
}
.update svg { width: 6px; height: 28px; }

/* Job posting */
.page {
  flex: 1;
  min-height: 0;
  overflow: hidden;
  padding: 74px 0 0 431px;
  font: 28px/40px "Noto Sans", sans-serif;
  color: #2d2d2d;
  white-space: nowrap;
}
.head {
  position: relative;
  width: 1300px;
  height: 337px;
  padding-left: 28px;
  border-bottom: 2px solid #e0e0e0;
}
.speck { position: absolute; background: #222; }
.speck.a { left: 25px; top: 45px; width: 2px; height: 5px; }
.speck.b { left: 26px; top: 240px; width: 2px; height: 4px; }
h1 { font-size: 48px; line-height: 64px; margin-bottom: 12px; color: #000; letter-spacing: -1.4px; }
.company { color: #2557a7; }
.actions { display: flex; gap: 32px; margin-top: 16px; }
.applied, .save {
  height: 88px;
  border-radius: 16px;
  display: flex;
  align-items: center;
  justify-content: center;
}
.applied { width: 574px; background: #a8badc; color: #fff; font-size: 32px; font-weight: 700; }
.save { width: 88px; background: #f2f2f2; }
.save svg { width: 40px; height: 37px; margin-top: -4px; }
.desc { padding-left: 28px; }
h2 { font-size: 36px; line-height: 48px; margin: 32px 0; letter-spacing: -.1px; }
h3 { font-size: 28px; line-height: 40px; margin: 28px 0; }
h2 + h3 { margin-top: 32px; }
ul { padding-left: 79.500px; }

/* Dock */
.dock {
  width: 2744px;
  height: 104px;
  margin: 12px 0 0 68px;
  padding-left: 5px;
  flex: none;
  display: flex;
  border-radius: 34px;
  background: linear-gradient(90deg, #625577 0, #61547a 600px, #67528e 1250px, #68559a 1550px, #9653b9 1800px, #9653bd 2000px, #8053aa 2200px, #6b5593 2400px, #68568c 100%);
  box-shadow: inset 0 0 0 2px rgba(255, 255, 255, .2), 0 0 70px rgba(0, 0, 0, .25);
}
.dock svg { width: 85.66px; height: 104px; flex: none; overflow: visible; }
.divider { width: 2px; height: 76px; margin: 14px 18.500px 0 19px; flex: none; background: #582482; }
.dot { fill: #11021f; }
.petals rect { mix-blend-mode: multiply; opacity: .9; }
.nov { font-size: 14.500px; font-weight: 600; fill: #fff; text-anchor: middle; }
.day { font-size: 40px; font-weight: 300; fill: #222; text-anchor: middle; letter-spacing: -1px; }
.one { font-size: 18px; fill: #fff; text-anchor: middle; }
```
